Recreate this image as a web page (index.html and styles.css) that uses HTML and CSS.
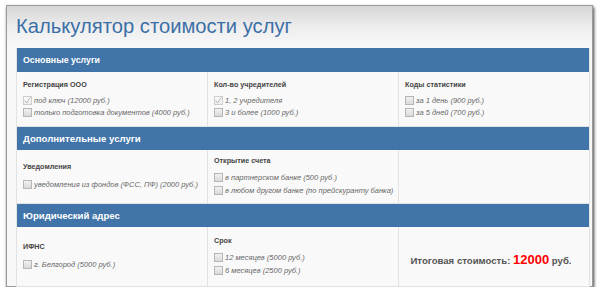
FILE: index.html
```html
<!DOCTYPE html>
<html lang="ru">
<head>
<meta charset="utf-8">
<title>Калькулятор стоимости услуг</title>
<link rel="stylesheet" href="styles.css">
</head>
<body>
<div class="card">
  <h1 class="title">Калькулятор стоимости услуг</h1>
  <table class="calc">
    <colgroup><col class="c"><col class="c"><col class="c"></colgroup>
    <tr class="head h1row"><th colspan="3">Основные услуги</th></tr>
    <tr class="row r1">
      <td>
        <div class="label">Регистрация ООО</div>
        <div class="opt"><span class="cb checked"><svg viewBox="0 0 9 9" width="9" height="9"><path d="M1.6 4.6 L3.6 6.8 L7.6 1.2" fill="none" stroke="#b8b8b8" stroke-width="1"/></svg></span><span class="ot">под ключ (12000 руб.)</span></div>
        <div class="opt"><span class="cb"></span><span class="ot">только подготовка документов (4000 руб.)</span></div>
      </td>
      <td>
        <div class="label">Кол-во учредителей</div>
        <div class="opt"><span class="cb checked"><svg viewBox="0 0 9 9" width="9" height="9"><path d="M1.6 4.6 L3.6 6.8 L7.6 1.2" fill="none" stroke="#b8b8b8" stroke-width="1"/></svg></span><span class="ot">1, 2 учредителя</span></div>
        <div class="opt"><span class="cb"></span><span class="ot">3 и более (1000 руб.)</span></div>
      </td>
      <td>
        <div class="label">Коды статистики</div>
        <div class="opt"><span class="cb"></span><span class="ot">за 1 день (900 руб.)</span></div>
        <div class="opt"><span class="cb"></span><span class="ot">за 5 дней (700 руб.)</span></div>
      </td>
    </tr>
    <tr class="head"><th colspan="3" class="big">Дополнительные услуги</th></tr>
    <tr class="row r2">
      <td>
        <div class="label">Уведомления</div>
        <div class="opt"><span class="cb"></span><span class="ot">уведомления из фондов (ФСС, ПФ) (2000 руб.)</span></div>
      </td>
      <td>
        <div class="label">Открытие счета</div>
        <div class="opt"><span class="cb"></span><span class="ot">в партнерском банке (500 руб.)</span></div>
        <div class="opt"><span class="cb"></span><span class="ot">в любом другом банке (по прейскуранту банка)</span></div>
      </td>
      <td></td>
    </tr>
    <tr class="head"><th colspan="3" class="big">Юридический адрес</th></tr>
    <tr class="row r3">
      <td>
        <div class="label">ИФНС</div>
        <div class="opt"><span class="cb"></span><span class="ot">г. Белгород (5000 руб.)</span></div>
      </td>
      <td>
        <div class="label">Срок</div>
        <div class="opt"><span class="cb"></span><span class="ot">12 месяцев (5000 руб.)</span></div>
        <div class="opt"><span class="cb"></span><span class="ot">6 месяцев (2500 руб.)</span></div>
      </td>
      <td class="total">Итоговая стоимость: <span class="sum">12000</span> руб.</td>
    </tr>
  </table>
</div>
</body>
</html>
```

FILE: styles.css
```css
html, body {
  margin: 0;
  padding: 0;
  background: #ffffff;
}
body {
  font-family: "Liberation Sans", Arial, sans-serif;
}
.card {
  margin: 5px 0 0 6px;
  width: 587px;
  height: 282px;
  box-sizing: border-box;
  border: 1px solid #9a9a9a;
  background: linear-gradient(#d6d6d6 0, #eeeeee 22px, #f8f8f8 40px, #f8f8f8 100%);
  box-shadow: 1px 2px 3px rgba(0, 0, 0, 0.75);
  padding: 7px 3px 0 9px;
}
.title {
  margin: 0 0 9px 0;
  font-weight: normal;
  font-size: 20.2px;
  line-height: 26px;
  color: #3b6fa7;
}
.calc {
  width: 573px;
  border-collapse: collapse;
  table-layout: fixed;
}
.calc .c {
  width: 191px;
}
.head th {
  background: #4174a8;
  color: #ffffff;
  font-weight: bold;
  font-size: 9.5px;
  text-align: left;
  padding: 0 0 0 6px;
  height: 23px;
  border: 1px solid #e4e4e4;
  border-top: 0;
  border-bottom: 0;
}
.head.h1row th {
  height: 24px;
  font-size: 8.8px;
}
.head th.big {
  font-size: 9.6px;
}
.row td {
  background: #f9f9f9;
  border: 1px solid #e2e2e2;
  border-top: 0;
  vertical-align: middle;
  padding: 0 0 0 6px;
  color: #555555;
}
.r1 td {
  height: 54px;
}
.r2 td, .r3 td {
  height: 53px;
}
.label {
  font-size: 7.2px;
  font-weight: bold;
  color: #444444;
  line-height: 10px;
  margin-bottom: 5px;
}
.opt {
  display: flex;
  align-items: center;
  height: 12px;
}
.r2 .opt, .r3 .opt {
  height: 13.5px;
}
.cb {
  width: 9px;
  height: 9px;
  box-sizing: border-box;
  border: 1px solid #b5b5b5;
  background: linear-gradient(#f2f2f2, #d9d9d9);
  margin-right: 2px;
  flex: none;
  display: flex;
}
.cb.checked {
  border-color: #cfcfcf;
  background: linear-gradient(#fbfbfb, #ececec);
}
.cb svg {
  margin: -1px;
}
.ot {
  font-size: 7.5px;
  font-style: italic;
  color: #666666;
  white-space: nowrap;
}
.total {
  text-align: center;
  font-size: 9.6px;
  font-weight: bold;
  color: #555555;
  padding: 6px 6px 0 0 !important;
}
.sum {
  color: #ff0000;
  font-size: 13px;
}
```
